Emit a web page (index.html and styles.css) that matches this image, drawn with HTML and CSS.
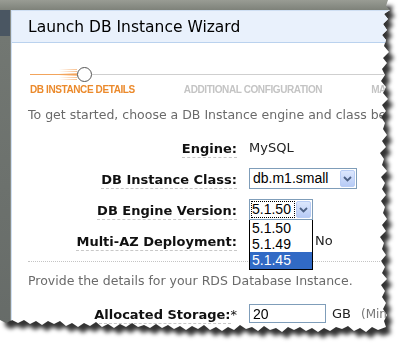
FILE: index.html
```html
<!DOCTYPE html>
<html lang="en">
<head>
    <meta charset="UTF-8">
    <title>Launch DB Instance Wizard</title>
    <link rel="stylesheet" href="styles.css">
</head>
<body>

<div class="shot">
    <div class="torn">
        <div class="app-side"></div>
        <div class="dialog">
            <div class="dialog-header">Launch DB Instance Wizard</div>
            <div class="dialog-body">

                <div class="stepper">
                    <div class="track">
                        <span class="track-done"></span>
                        <span class="step-dot"></span>
                        <span class="track-todo"></span>
                    </div>
                    <div class="step-labels">
                        <span class="step current">DB INSTANCE DETAILS</span>
                        <span class="step">ADDITIONAL CONFIGURATION</span>
                        <span class="step">MANAGEMENT OPTIONS</span>
                    </div>
                </div>

                <p class="intro">To get started, choose a DB Instance engine and class below.</p>

                <div class="form-rows">
                    <div class="row">
                        <div class="label-cell"><span class="label">Engine:</span></div>
                        <div class="value">MySQL</div>
                    </div>
                    <div class="row">
                        <div class="label-cell"><span class="label">DB Instance Class:</span></div>
                        <div class="value">
                            <div class="select select-class">
                                <span class="select-text">db.m1.small</span>
                                <span class="select-btn">
                                    <svg width="9" height="6" viewBox="0 0 9 6"><path d="M1 1 L4.5 4.5 L8 1" fill="none" stroke="#4d6185" stroke-width="1.8"/></svg>
                                </span>
                            </div>
                        </div>
                    </div>
                    <div class="row">
                        <div class="label-cell"><span class="label">DB Engine Version:</span></div>
                        <div class="value">
                            <div class="select select-version">
                                <span class="select-text focused">5.1.50</span>
                                <span class="select-btn">
                                    <svg width="9" height="6" viewBox="0 0 9 6"><path d="M1 1 L4.5 4.5 L8 1" fill="none" stroke="#4d6185" stroke-width="1.8"/></svg>
                                </span>
                                <ul class="select-list">
                                    <li>5.1.50</li>
                                    <li>5.1.49</li>
                                    <li class="selected">5.1.45</li>
                                </ul>
                            </div>
                        </div>
                    </div>
                    <div class="row">
                        <div class="label-cell"><span class="label">Multi-AZ Deployment:</span></div>
                        <div class="value radios">
                            <span class="radio"></span>
                            <span class="radio"></span><span>No</span>
                        </div>
                    </div>
                </div>

                <div class="divider"></div>

                <p class="intro">Provide the details for your RDS Database Instance.</p>

                <div class="row storage-row">
                    <div class="label-cell"><span class="label">Allocated Storage:</span><span class="req">*</span></div>
                    <div class="value">
                        <span class="text-input">20</span>
                        <span class="unit">GB</span>
                        <span class="hint">(Minimum: 5 GB)</span>
                    </div>
                </div>

            </div>
        </div>
    </div>
</div>

</body>
</html>
```

FILE: styles.css
```css
/* Page */
body {
    margin: 0;
    background: #fff;
    font-family: 'DejaVu Sans', Verdana, sans-serif;
}

/* Torn screenshot with its shadow */
.shot {
    width: 400px;
    height: 345px;
    filter: drop-shadow(5px 6px 2px rgba(0, 0, 0, 0.8));
}

.torn {
    display: flex;
    width: 392px;
    height: 338px;
    padding-top: 10px;
    box-sizing: border-box;
    background: linear-gradient(to bottom, #999c94 0, #7e827a 10px, transparent 10px);
    clip-path: polygon(0 0, 388px 0, 386px 6px, 390px 10px, 384px 14px, 388px 19px, 383px 24px, 387px 30px, 382px 35px, 386px 40px, 384px 46px, 389px 52px, 383px 58px, 387px 63px, 382px 69px, 385px 75px, 381px 81px, 386px 87px, 383px 93px, 388px 99px, 382px 105px, 386px 111px, 381px 117px, 385px 123px, 383px 129px, 387px 135px, 382px 141px, 386px 147px, 380px 153px, 384px 159px, 382px 165px, 387px 171px, 381px 177px, 385px 183px, 382px 189px, 386px 195px, 381px 201px, 385px 207px, 383px 213px, 387px 219px, 382px 225px, 386px 231px, 380px 237px, 384px 243px, 382px 249px, 386px 255px, 381px 261px, 385px 267px, 382px 273px, 387px 279px, 381px 285px, 385px 291px, 382px 297px, 386px 303px, 383px 309px, 387px 315px, 384px 321px, 386px 327px, 378px 330px, 372px 327px, 366px 332px, 360px 328px, 354px 331px, 348px 326px, 342px 329px, 336px 327px, 330px 331px, 324px 328px, 318px 332px, 312px 328px, 306px 331px, 300px 327px, 294px 330px, 288px 327px, 282px 332px, 276px 328px, 270px 330px, 264px 326px, 258px 331px, 252px 327px, 246px 329px, 240px 325px, 234px 330px, 228px 327px, 222px 331px, 216px 327px, 210px 330px, 204px 325px, 198px 329px, 192px 326px, 186px 330px, 180px 326px, 174px 329px, 168px 325px, 162px 328px, 156px 324px, 150px 328px, 144px 325px, 138px 327px, 132px 323px, 126px 327px, 120px 324px, 114px 328px, 108px 324px, 102px 327px, 96px 322px, 90px 326px, 84px 323px, 78px 327px, 72px 323px, 66px 326px, 60px 321px, 54px 324px, 48px 321px, 42px 325px, 36px 321px, 30px 324px, 24px 320px, 18px 323px, 12px 320px, 6px 323px, 0 320px);
}

/* Bit of the console visible behind the dialog */
.app-side {
    width: 10px;
    flex-shrink: 0;
    background: linear-gradient(to bottom, #4a5662 0, #4a5662 26px, #727772 26px, #666b68 100%);
    border-right: 1px solid #8a8f8a;
}

/* Dialog */
.dialog {
    flex: 1;
    background: #fff;
    border-left: 1px solid #cfdff3;
    border-top: 1px solid #cfdff3;
    overflow: hidden;
    white-space: nowrap;
}

.dialog-header {
    height: 31px;
    line-height: 33px;
    padding-left: 16px;
    background-color: #e9f1fc;
    border-bottom: 1px solid #bad2ee;
    font-size: 15.5px;
    color: #000;
}

.dialog-body {
    padding-left: 16px;
}

/* Wizard steps */
.stepper {
    padding-top: 24px;
}

.track {
    display: flex;
    align-items: center;
    height: 15px;
    padding-left: 2px;
}

.track-done {
    width: 47px;
    height: 1px;
    background-color: #f2a45c;
}

.step-dot {
    position: relative;
    width: 13px;
    height: 13px;
    border: 1px solid #555;
    border-radius: 50%;
    background: #fff;
}

.step-dot::before {
    content: '';
    position: absolute;
    right: 14px;
    top: 1px;
    width: 18px;
    height: 11px;
    background: repeating-linear-gradient(to bottom, rgba(245, 165, 95, 0.7) 0 1px, transparent 1px 2px);
    -webkit-mask-image: linear-gradient(to right, transparent, #000);
    mask-image: linear-gradient(to right, transparent, #000);
}

.track-todo {
    flex: 1;
    height: 1px;
    background-color: #cfcfcf;
}

.step-labels {
    display: flex;
    gap: 49px;
    padding-left: 2px;
    margin-top: 2px;
    height: 12px;
    line-height: 12px;
}

.step {
    font-family: 'Liberation Sans', Arial, sans-serif;
    font-size: 10px;
    font-weight: bold;
    letter-spacing: -0.4px;
    color: #c4c4c4;
}

.step.current {
    color: #eb8a2c;
}

/* Text */
.intro {
    margin: 11px 0 0;
    height: 16px;
    line-height: 16px;
    font-size: 12.5px;
    color: #6a6a6a;
}

/* Form rows */
.form-rows {
    margin-top: 9px;
}

.row {
    display: flex;
    align-items: center;
    height: 31px;
}

.storage-row {
    margin-top: 9px;
}

.label-cell {
    width: 209px;
    flex-shrink: 0;
    text-align: right;
}

.label {
    font-size: 13px;
    font-weight: bold;
    color: #111;
    border-bottom: 1px dashed #c8c8c8;
    padding-bottom: 1px;
}

.req {
    font-size: 13px;
    color: #111;
}

.value {
    display: flex;
    align-items: center;
    margin-left: 12px;
    font-size: 13px;
    color: #222;
}

/* Selects drawn as Windows XP controls */
.select {
    position: relative;
    display: flex;
    align-items: center;
    height: 21px;
    box-sizing: border-box;
    border: 1px solid #7f9db9;
    background: #fff;
    font-family: 'Liberation Sans', Arial, sans-serif;
    font-size: 14px;
    color: #000;
}

.select-class {
    width: 108px;
}

.select-version {
    width: 64px;
}

.select-text {
    flex: 1;
    padding-left: 3px;
    line-height: 15px;
}

.select-text.focused {
    flex: none;
    width: 42px;
    margin-left: 1px;
    padding-left: 0;
    border: 1px dotted #000;
    background: #fff;
}

.select-version .select-btn {
    margin-left: auto;
}

.select-btn {
    display: flex;
    align-items: center;
    justify-content: center;
    width: 15px;
    height: 17px;
    margin-right: 1px;
    border: 1px solid #b9cdf5;
    border-radius: 2px;
    box-sizing: border-box;
    background: linear-gradient(to bottom, #dce7fd, #b7cbf6);
}

.select-list {
    position: absolute;
    top: 20px;
    left: -1px;
    width: 64px;
    margin: 0;
    padding: 0;
    list-style: none;
    background: #fff;
    border: 1px solid #000;
    border-top: none;
    box-sizing: border-box;
    z-index: 2;
}

.select-list li {
    height: 16px;
    line-height: 16px;
    padding-left: 2px;
}

.select-list li.selected {
    height: 17px;
    background-color: #316ac5;
    color: #fff;
}

/* Radios and inputs */
.radios {
    gap: 4px;
}

.radio {
    width: 11px;
    height: 11px;
    border: 1px solid #1c5180;
    border-radius: 50%;
}

.radios span:nth-child(2) {
    margin-left: 32px;
}

.text-input {
    width: 77px;
    height: 19px;
    line-height: 19px;
    box-sizing: border-box;
    border: 1px solid #7f9db9;
    padding-left: 3px;
    font-family: 'Liberation Sans', Arial, sans-serif;
    font-size: 14px;
    color: #000;
}

.unit {
    margin-left: 6px;
}

.hint {
    margin-left: 10px;
    font-size: 12px;
    color: #777;
}

.divider {
    margin-top: 5px;
    border-top: 1px dotted #c4c4c4;
}
```
